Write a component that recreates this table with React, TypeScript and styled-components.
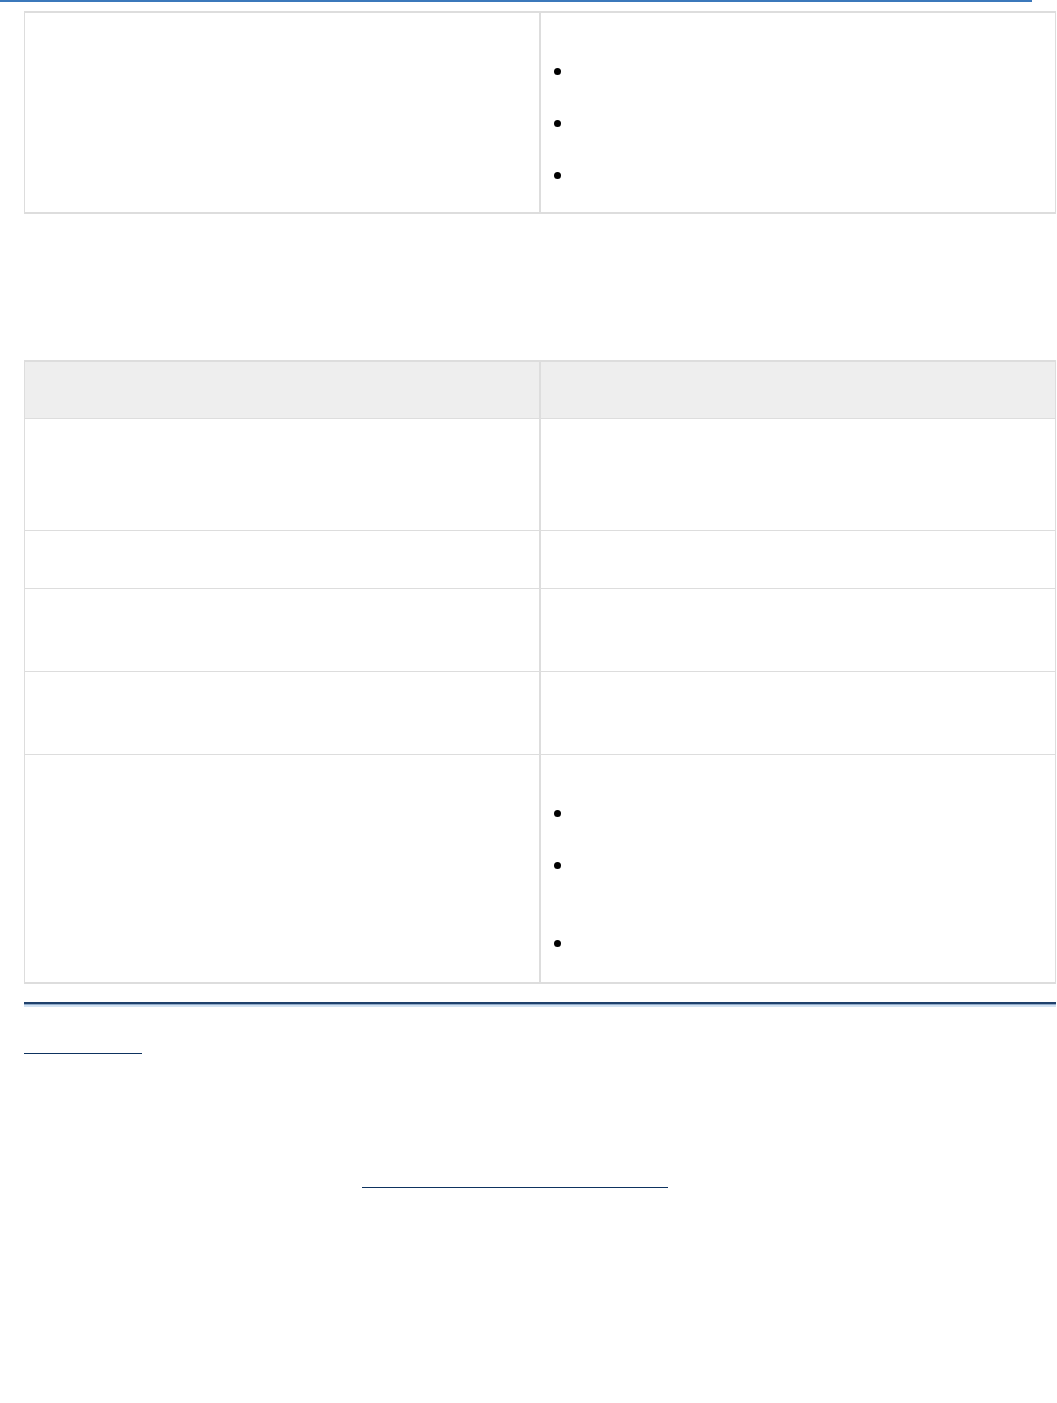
import React from "react";
import styled, { createGlobalStyle } from "styled-components";

const Global = createGlobalStyle`
  html, body { margin: 0; padding: 0; background: #ffffff; }
  body { font-family: "Liberation Sans", Arial, sans-serif; font-size: 14px; color: #333; }
`;

const TopRule = styled.div`
  width: 1032px;
  height: 2px;
  background: #3b78bb;
`;

const Page = styled.main`
  padding: 9px 0 0 24px;
  width: 1032px;
`;

const Table = styled.table<{ $mt?: number }>`
  width: 1032px;
  border-collapse: collapse;
  table-layout: fixed;
  border-top: 2px solid #dddddd;
  border-bottom: 2px solid #dddddd;
  margin-top: ${(p) => p.$mt ?? 0}px;
`;

const Row = styled.tr<{ $h: number }>`
  height: ${(p) => p.$h}px;
`;

const Cell = styled.td`
  border: 1px solid #dddddd;
  padding: 10px;
  vertical-align: top;
  width: 50%;
  &:nth-child(2) { border-left: 2px solid #dddddd; }
`;

const HeadCell = styled.th`
  border: 1px solid #dddddd;
  background: #eeeeee;
  padding: 10px;
  width: 50%;
  &:nth-child(2) { border-left: 2px solid #dddddd; }
`;

const List = styled.ul`
  list-style: none;
  margin: 36px 0 13px;
  padding: 0 0 0 3px;
  display: flex;
  flex-direction: column;
  gap: 26px;
`;

const Item = styled.li<{ $lines?: number }>`
  display: flex;
  align-items: flex-start;
  height: ${(p) => (p.$lines ?? 1) * 26}px;
`;

const Dot = styled.span`
  width: 7px;
  height: 7px;
  border-radius: 50%;
  background: #000;
  margin-top: 9px;
  flex: none;
`;

const Divider = styled.div`
  margin-top: 18px;
  width: 1032px;
  height: 5px;
  border-top: 2px solid #1f416c;
  background: linear-gradient(#8ea9c8 0 1px, #d2e2f2 1px);
  box-sizing: border-box;
`;

const LinkLine = styled.a<{ $w: number; $ml: number; $mt: number }>`
  display: block;
  width: ${(p) => p.$w}px;
  margin-left: ${(p) => p.$ml}px;
  margin-top: ${(p) => p.$mt}px;
  height: 20px;
  border-bottom: 1px solid #0e3360;
`;

function Bullets({ lines }: { lines: number[] }) {
  return (
    <List>
      {lines.map((l, i) => (
        <Item key={i} $lines={l}>
          <Dot />
        </Item>
      ))}
    </List>
  );
}

export default function App() {
  return (
    <>
      <Global />
      <TopRule />
      <Page>
        <Table>
          <tbody>
            <Row $h={199}>
              <Cell />
              <Cell>
                <Bullets lines={[1, 1, 1]} />
              </Cell>
            </Row>
          </tbody>
        </Table>
        <Table $mt={146}>
          <thead>
            <Row $h={57}>
              <HeadCell />
              <HeadCell />
            </Row>
          </thead>
          <tbody>
            <Row $h={112}>
              <Cell />
              <Cell />
            </Row>
            <Row $h={58}>
              <Cell />
              <Cell />
            </Row>
            <Row $h={83}>
              <Cell />
              <Cell />
            </Row>
            <Row $h={83}>
              <Cell />
              <Cell />
            </Row>
            <Row $h={229}>
              <Cell />
              <Cell>
                <Bullets lines={[1, 2, 1]} />
              </Cell>
            </Row>
          </tbody>
        </Table>
        <Divider />
        <LinkLine href="#" $w={118} $ml={0} $mt={26} />
        <LinkLine href="#" $w={306} $ml={338} $mt={113} />
      </Page>
    </>
  );
}
